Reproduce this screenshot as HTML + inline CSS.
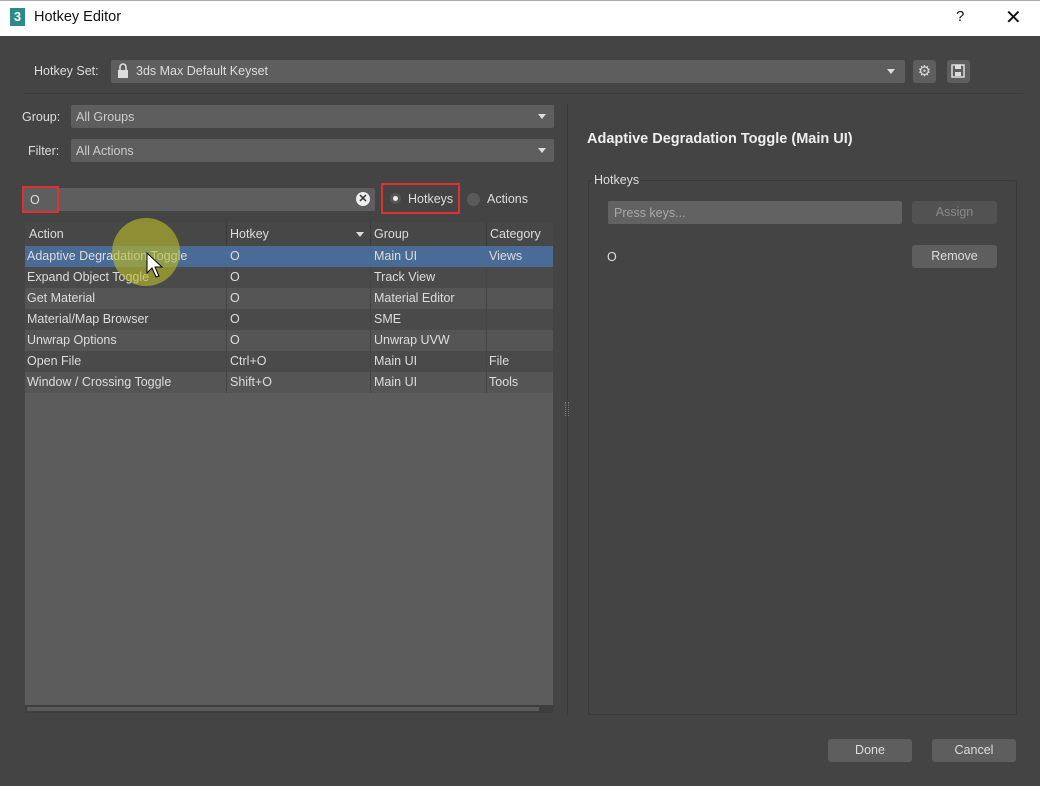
<!DOCTYPE html>
<html><head><style>
*{margin:0;padding:0;box-sizing:border-box}
body{width:1040px;height:786px;background:#444;font-family:"Liberation Sans",sans-serif;font-size:12.5px;color:#ddd;position:relative;overflow:hidden}
.a{position:absolute}
.inp{position:absolute;background:#5e5e5e;border-radius:2px}
.arr{position:absolute;width:0;height:0;border-left:4px solid transparent;border-right:4px solid transparent;border-top:5px solid #ddd}
.row{position:absolute;left:25px;width:528px;height:21px;line-height:21px}
.row span{position:absolute;top:0}
.btn{position:absolute;background:#5e5e5e;border-radius:3px;text-align:center;color:#ddd}
</style></head><body>
<div class="a" style="left:0;top:0;width:1040px;height:36px;background:#fff;border-top:1px solid #aaa"></div>
<div class="a" style="left:10px;top:8px;width:15px;height:18px;background:#2d8a8a;color:#fff;font-weight:bold;font-size:13px;text-align:center;line-height:18px">3</div>
<div class="a" style="left:34px;top:9px;color:#111;font-size:14.5px">Hotkey Editor</div>
<div class="a" style="left:956px;top:8px;color:#111;font-size:15px">?</div>
<div class="a" style="left:1005px;top:5px;color:#111;font-size:20px">✕</div>

<div class="a" style="left:34px;top:64px;">Hotkey Set:</div>
<div class="inp" style="left:111px;top:60px;width:794px;height:23px"></div>
<svg class="a" style="left:117px;top:63px" width="12" height="16"><path d="M3 7V4a3 3 0 0 1 6 0v3" stroke="#ddd" stroke-width="1.6" fill="none"/><rect x="1" y="7" width="10" height="8" fill="#ddd"/></svg>
<div class="a" style="left:136px;top:64px">3ds Max Default Keyset</div>
<div class="arr" style="left:887px;top:69px"></div>
<div class="btn" style="left:913px;top:60px;width:23px;height:23px;font-size:15px;line-height:23px">⚙</div>
<div class="btn" style="left:947px;top:60px;width:23px;height:23px"></div>
<svg class="a" style="left:951px;top:64px" width="15" height="15"><rect x="1" y="1" width="12" height="12" fill="none" stroke="#ddd" stroke-width="1.5"/><rect x="4" y="1" width="6" height="4" fill="#ddd"/><rect x="4" y="8" width="6" height="4" fill="#ddd"/></svg>
<div class="a" style="left:23px;top:93px;width:1000px;height:1px;background:#3a3a3a"></div>

<div class="a" style="left:22px;top:110px">Group:</div>
<div class="inp" style="left:71px;top:105px;width:483px;height:23px"></div>
<div class="a" style="left:76px;top:110px;color:#ccc">All Groups</div>
<div class="arr" style="left:538px;top:114px"></div>
<div class="a" style="left:28px;top:144px">Filter:</div>
<div class="inp" style="left:71px;top:139px;width:483px;height:23px"></div>
<div class="a" style="left:76px;top:144px;color:#ccc">All Actions</div>
<div class="arr" style="left:538px;top:148px"></div>

<div class="inp" style="left:23px;top:188px;width:352px;height:23px"></div>
<div class="a" style="left:22px;top:186px;width:37px;height:27px;border:2px solid #e03030"></div>
<div class="a" style="left:30px;top:193px">O</div>
<div class="a" style="left:356px;top:192px;width:14px;height:14px;border-radius:50%;background:#eee;color:#333;font-size:11px;line-height:14px;text-align:center;font-weight:bold">✕</div>
<div class="a" style="left:381px;top:183px;width:79px;height:31px;border:2px solid #e03030"></div>
<div class="a" style="left:390px;top:193px;width:11px;height:11px;border-radius:50%;background:#555"><div class="a" style="left:3px;top:3px;width:5px;height:5px;border-radius:50%;background:#eee"></div></div>
<div class="a" style="left:408px;top:192px">Hotkeys</div>
<div class="a" style="left:467px;top:193px;width:13px;height:13px;border-radius:50%;background:#5a5a5a"></div>
<div class="a" style="left:487px;top:192px">Actions</div>

<div class="a" style="left:25px;top:222px;width:528px;height:483px;background:#5c5c5c"></div>
<div class="a" style="left:25px;top:222px;width:528px;height:24px;background:#474747"></div>
<div class="a" style="left:226px;top:222px;width:1px;height:24px;background:#3a3a3a"></div>
<div class="a" style="left:370px;top:222px;width:1px;height:24px;background:#3a3a3a"></div>
<div class="a" style="left:486px;top:222px;width:1px;height:24px;background:#3a3a3a"></div>
<div class="a" style="left:29px;top:227px">Action</div>
<div class="a" style="left:230px;top:227px">Hotkey</div>
<div class="arr" style="left:356px;top:232px"></div>
<div class="a" style="left:374px;top:227px">Group</div>
<div class="a" style="left:490px;top:227px">Category</div>

<div class="row" style="top:246px;background:#4a6b95"><span style="left:2px">Adaptive Degradation Toggle</span><span style="left:205px">O</span><span style="left:349px">Main UI</span><span style="left:464px">Views</span></div>
<div class="row" style="top:267px;background:#4a4a4a"><span style="left:2px">Expand Object Toggle</span><span style="left:205px">O</span><span style="left:349px">Track View</span></div>
<div class="row" style="top:288px;background:#555"><span style="left:2px">Get Material</span><span style="left:205px">O</span><span style="left:349px">Material Editor</span></div>
<div class="row" style="top:309px;background:#4a4a4a"><span style="left:2px">Material/Map Browser</span><span style="left:205px">O</span><span style="left:349px">SME</span></div>
<div class="row" style="top:330px;background:#555"><span style="left:2px">Unwrap Options</span><span style="left:205px">O</span><span style="left:349px">Unwrap UVW</span></div>
<div class="row" style="top:351px;background:#4a4a4a"><span style="left:2px">Open File</span><span style="left:205px">Ctrl+O</span><span style="left:349px">Main UI</span><span style="left:464px">File</span></div>
<div class="row" style="top:372px;background:#555"><span style="left:2px">Window / Crossing Toggle</span><span style="left:205px">Shift+O</span><span style="left:349px">Main UI</span><span style="left:464px">Tools</span></div>
<div class="a" style="left:226px;top:267px;width:1px;height:126px;background:#454545"></div>
<div class="a" style="left:370px;top:267px;width:1px;height:126px;background:#454545"></div>
<div class="a" style="left:486px;top:267px;width:1px;height:126px;background:#454545"></div>
<div class="a" style="left:112px;top:218px;width:68px;height:68px;border-radius:50%;background:rgba(190,190,40,0.6)"></div>
<svg class="a" style="left:146px;top:252px" width="20" height="28"><path d="M1 1 L1 21 L6 16 L10 25 L13 24 L9 15 L16 15 Z" fill="#fff" stroke="#000" stroke-width="1"/></svg>
<div class="a" style="left:25px;top:705px;width:528px;height:8px;background:#3e3e3e"></div>
<div class="a" style="left:27px;top:707px;width:512px;height:4px;background:#5a5a5a"></div>

<div class="a" style="left:567px;top:103px;width:1px;height:612px;background:#3a3a3a"></div>
<div class="a" style="left:565px;top:402px;width:4px;height:14px;border-left:1px dotted #777;border-right:1px dotted #777"></div>
<div class="a" style="left:587px;top:131px;font-size:14.5px;font-weight:bold;color:#eee">Adaptive Degradation Toggle (Main UI)</div>
<div class="a" style="left:588px;top:180px;width:429px;height:535px;border:1px solid #3a3a3a;border-radius:2px"></div>
<div class="a" style="left:593px;top:173px;background:#444;padding:0 1px">Hotkeys</div>
<div class="inp" style="left:608px;top:201px;width:294px;height:23px;background:#626262"></div>
<div class="a" style="left:614px;top:206px;color:#a8a8a8">Press keys...</div>
<div class="btn" style="left:912px;top:201px;width:85px;height:23px;line-height:23px;background:#525252;color:#8a8a8a">Assign</div>
<div class="a" style="left:607px;top:250px">O</div>
<div class="btn" style="left:912px;top:245px;width:85px;height:23px;line-height:23px">Remove</div>

<div class="btn" style="left:828px;top:739px;width:84px;height:23px;line-height:23px">Done</div>
<div class="btn" style="left:932px;top:739px;width:84px;height:23px;line-height:23px">Cancel</div>
</body></html>
